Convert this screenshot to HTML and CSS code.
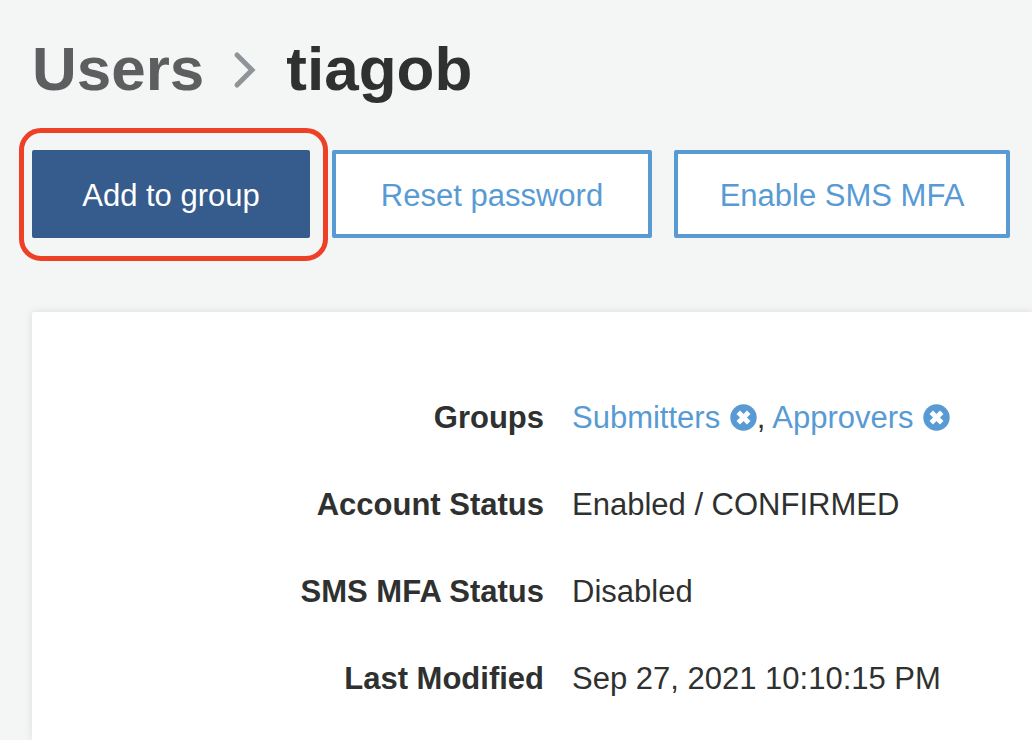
FILE: index.html
```html
<!DOCTYPE html>
<html lang="en">
<head>
<meta charset="utf-8">
<meta name="viewport" content="width=device-width, initial-scale=1">
<title>Users - tiagob</title>
<link rel="stylesheet" href="styles.css">
</head>
<body>
<main class="page">
  <h1 class="title">
    <a class="title-parent" href="#users">Users</a>
    <svg class="title-chevron" viewBox="0 0 24 38" aria-hidden="true"><path d="M5 4 20 19 5 34"/></svg>
    <span>tiagob</span>
  </h1>

  <div class="actions">
    <div class="highlight"><button class="btn btn-primary" type="button">Add to group</button></div>
    <button class="btn btn-reset" type="button">Reset password</button>
    <button class="btn btn-mfa" type="button">Enable SMS MFA</button>
  </div>

  <section class="card">
    <dl class="details">
      <dt>Groups</dt>
      <dd><a class="link" href="#submitters">Submitters</a> <button class="remove" type="button" aria-label="Remove from Submitters"><svg viewBox="0 0 27 27" aria-hidden="true"><circle cx="13.5" cy="13.5" r="13.2"/><path d="M8.300 8.300l10.400 10.400M18.700 8.300l-10.400 10.400"/></svg></button>, <a class="link" href="#approvers">Approvers</a> <button class="remove" type="button" aria-label="Remove from Approvers"><svg viewBox="0 0 27 27" aria-hidden="true"><circle cx="13.5" cy="13.5" r="13.2"/><path d="M8.300 8.300l10.400 10.400M18.700 8.300l-10.400 10.400"/></svg></button></dd>
      <dt>Account Status</dt>
      <dd>Enabled / CONFIRMED</dd>
      <dt>SMS MFA Status</dt>
      <dd>Disabled</dd>
      <dt>Last Modified</dt>
      <dd>Sep 27, 2021 10:10:15 PM</dd>
    </dl>
  </section>
</main>
</body>
</html>
```

FILE: styles.css
```css
* {
  box-sizing: border-box;
}

body {
  margin: 0;
  background: #f4f6f6;
  color: #2f3130;
  font: 31px/44px "Liberation Sans", Arial, sans-serif;
}

.page {
  display: flex;
  flex-direction: column;
  min-height: 100vh;
  padding: 31px 0 0 32px;
}

.title {
  display: flex;
  align-items: center;
  margin: 0 0 43px;
  font-size: 62px;
  line-height: 76px;
}

.title-parent {
  color: #5c5e5f;
  text-decoration: none;
}

.title-chevron {
  width: 24px;
  height: 38px;
  margin: 2px 30px 0 28px;
  fill: none;
  stroke: #8e9497;
  stroke-width: 5;
  stroke-linecap: round;
}

.actions {
  display: flex;
  gap: 22px;
  margin-bottom: 74px;
}

.btn {
  flex: none;
  height: 88px;
  padding: 4px 40px 0;
  border: 4px solid #589bd4;
  border-radius: 2px;
  background: #fff;
  color: #589bd4;
  font: inherit;
  white-space: nowrap;
  cursor: pointer;
}

.btn-primary {
  width: 278px;
  border-color: #365b8d;
  background: #365b8d;
  color: #fff;
}

.btn-reset {
  width: 320px;
}

.btn-mfa {
  width: 336px;
}

.highlight {
  position: relative;
  display: flex;
}

.highlight::after {
  content: "";
  position: absolute;
  inset: -22px -18px -23px -13px;
  border: 5px solid #ee4027;
  border-radius: 22px;
  pointer-events: none;
}

.card {
  flex: 1;
  padding: 84px 0 38px 52px;
  border-radius: 2px 0 0 0;
  background: #fff;
  box-shadow: 0 0 8px rgba(0, 0, 0, 0.1);
}

.details {
  display: grid;
  grid-template-columns: 1fr 1fr;
  gap: 43px 28px;
  margin: 0;
}

.details dt {
  font-weight: bold;
  text-align: right;
}

.details dd {
  margin: 0;
  white-space: nowrap;
}

.link {
  color: #589bd4;
  text-decoration: none;
}

.remove {
  margin: 0 0 5px 1px;
  padding: 0;
  border: 0;
  background: none;
  font: inherit;
  vertical-align: middle;
  cursor: pointer;
}

.remove svg {
  display: block;
  width: 27px;
  height: 27px;
  fill: #589bd4;
}

.remove path {
  stroke: #fff;
  stroke-width: 5;
}
```
